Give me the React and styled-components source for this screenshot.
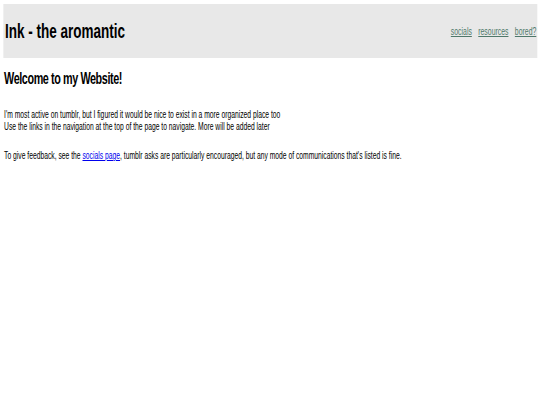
import styled, { createGlobalStyle } from "styled-components";

const Global = createGlobalStyle`
  body {
    margin: 0;
    background: #ffffff;
    font-family: "Liberation Sans", Arial, sans-serif;
    color: #000;
    overflow: hidden;
  }
`

// the page is drawn in a narrow face: squash the whole flow horizontally
const Page = styled.div`
  width: 800px;
  padding: 4px 4.5px;
  box-sizing: border-box;
  transform: scaleX(0.675);
  transform-origin: 0 0;
`

const Header = styled.header`
  display: flex;
  justify-content: space-between;
  align-items: center;
  height: 54px;
  padding: 0 1px 0 3px;
  background: #e8e8e8;
`

const Title = styled.h1`
  margin: 0;
  font-size: 20px;
  font-weight: bold;
`

const Nav = styled.nav`
  display: flex;
  gap: 9.5px;
  font-size: 10.2px;
`

const NavLink = styled.a`
  color: #4f786a;
  text-decoration: underline;
`

const Content = styled.main`
  padding: 0 1.5px;
`

const Heading = styled.h2`
  margin: 12px 0 0;
  font-size: 16px;
  font-weight: bold;
  letter-spacing: -0.6px;
`

const Para = styled.p`
  margin: ${(p) => p.$top || 0}px 0 0;
  font-size: 10px;
  line-height: 12px;
`

const Link = styled.a`
  color: #0000ee;
  text-decoration: underline;
`

export default function App() {
  return (
    <Page>
      <Global />
      <Header>
        <Title>Ink - the aromantic</Title>
        <Nav>
          <NavLink href="#">socials</NavLink>
          <NavLink href="#">resources</NavLink>
          <NavLink href="#">bored?</NavLink>
        </Nav>
      </Header>
      <Content>
        <Heading>Welcome to my Website!</Heading>
        <Para $top={21}>
          I'm most active on tumblr, but I figured it would be nice to exist in a more organized place too
          <br />
          Use the links in the navigation at the top of the page to navigate. More will be added later
        </Para>
        <Para $top={17}>
          To give feedback, see the <Link href="#">socials page</Link>, tumblr asks are particularly encouraged, but any mode of communications that's listed is fine.
        </Para>
      </Content>
    </Page>
  );
}
